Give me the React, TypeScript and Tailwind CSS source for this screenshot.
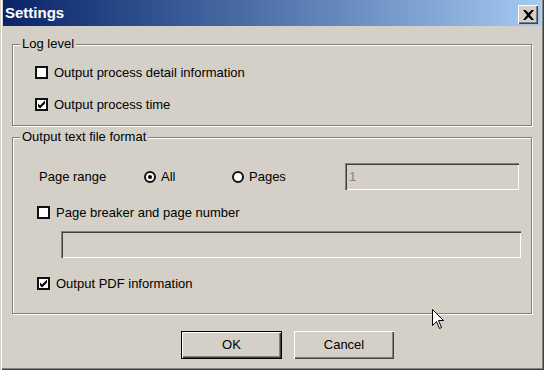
import type { ReactNode } from 'react';

const font = { fontFamily: '"Liberation Sans", Arial, sans-serif' };

const CheckBox = ({ checked, label, className = '' }: { checked?: boolean; label: string; className?: string }) => (
  <div className={`flex h-[13px] items-center ${className}`}>
    <div className="flex h-[13px] w-[13px] shrink-0 items-center justify-center border-2 border-[#111] bg-white">
      {checked && (
        <svg width="9" height="9" viewBox="0 0 9 9">
          <path d="M1 3.5 L3 5.5 L8 0.5 L8 3.5 L3 8.5 L1 6.5 Z" fill="#000" />
        </svg>
      )}
    </div>
    <span className="ml-[6px] whitespace-nowrap leading-[15px]">{label}</span>
  </div>
);

const Radio = ({ checked, label, className = '' }: { checked?: boolean; label: string; className?: string }) => (
  <div className={`flex items-center ${className}`}>
    <div className="flex h-[12px] w-[12px] shrink-0 items-center justify-center rounded-full border-2 border-[#111] bg-white">
      {checked && <div className="h-[4px] w-[4px] rounded-full bg-black" />}
    </div>
    <span className="ml-[5px] leading-[15px]">{label}</span>
  </div>
);

const sunken =
  'bg-[#d4d0c8] shadow-[inset_1px_1px_0_#808080,inset_2px_2px_0_#404040,inset_-1px_-1px_0_#fff,inset_-2px_-2px_0_#d4d0c8]';

const raised = 'bg-[#d4d0c8] shadow-[inset_1px_1px_0_#fff,inset_-1px_-1px_0_#404040,inset_-2px_-2px_0_#808080]';

const GroupBox = ({ title, className, children }: { title: string; className: string; children: ReactNode }) => (
  <div className={`relative w-[520px] border border-[#808080] shadow-[1px_1px_0_#fff,inset_1px_1px_0_#fff] ${className}`}>
    <span className="absolute left-[7px] top-[-9px] h-[15px] bg-[#d4d0c8] px-[2px] leading-[15px]">{title}</span>
    {children}
  </div>
);

export default function App() {
  return (
    <div
      className="relative h-[370px] w-[544px] overflow-hidden bg-[#d4d0c8] text-[13px] text-black shadow-[inset_1px_0_0_#d4d0c8,inset_2px_0_0_#fff,inset_-1px_-1px_0_#404040,inset_-2px_-2px_0_#808080]"
      style={font}
    >
      <div className="mx-[3px] flex h-[26px] items-start justify-between bg-gradient-to-r from-[#0a246a] to-[#a6caf0] pl-[2px] pr-[3px]">
        <span className="mt-[4px] text-[15px] font-bold leading-[18px] text-white">Settings</span>
        <div className={`mt-[5px] flex h-[19px] w-[20px] items-center justify-center ${raised}`}>
          <svg width="11" height="10" viewBox="0 0 11 10">
            <path d="M0 0 L2.5 0 L5.5 3 L8.5 0 L11 0 L7 5 L11 10 L8.5 10 L5.5 7 L2.5 10 L0 10 L4 5 Z" fill="#000" />
          </svg>
        </div>
      </div>

      <div className="px-[12px] pt-[18px]">
        <GroupBox title="Log level" className="h-[82px]">
          <CheckBox label="Output process detail information" className="ml-[22px] mt-[21px]" />
          <CheckBox checked label="Output process time" className="ml-[22px] mt-[19px]" />
        </GroupBox>

        <GroupBox title="Output text file format" className="mt-[11px] h-[177px]">
          <div className="ml-[26px] mt-[25px] flex h-[27px] items-center">
            <span className="w-[105px]">Page range</span>
            <Radio checked label="All" className="w-[88px]" />
            <Radio label="Pages" className="w-[113px]" />
            <div className={`flex h-[27px] w-[174px] items-center pl-[4px] text-[#808080] ${sunken}`}>1</div>
          </div>
          <CheckBox label="Page breaker and page number" className="ml-[24px] mt-[16px]" />
          <div className={`ml-[48px] mt-[12px] h-[27px] w-[460px] ${sunken}`} />
          <CheckBox checked label="Output PDF information" className="ml-[24px] mt-[19px]" />
        </GroupBox>

        <div className="ml-[169px] mt-[17px] flex gap-[12px]">
          <button className={`flex h-[28px] w-[101px] items-center justify-center border border-black ${raised}`}>
            OK
          </button>
          <button className={`flex h-[28px] w-[100px] items-center justify-center ${raised}`}>
            Cancel
          </button>
        </div>
      </div>

      <svg className="absolute left-[432px] top-[309px]" width="13" height="21" viewBox="0 0 13 21">
        <path d="M0.5 0.5 L0.5 16.5 L4.5 12.5 L7.5 19.5 L9.5 18.5 L6.5 11.5 L11.5 11.5 Z" fill="#fff" stroke="#000" strokeWidth="1" />
      </svg>
    </div>
  );
}
